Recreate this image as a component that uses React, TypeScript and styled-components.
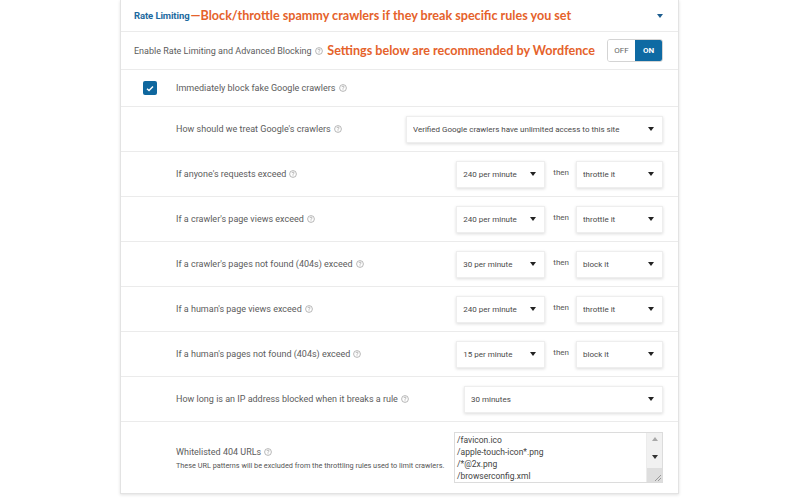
import React from "react";
import styled, { createGlobalStyle } from "styled-components";

const Global = createGlobalStyle`
  html, body { margin: 0; padding: 0; background: #ffffff; }
  body { width: 800px; height: 500px; overflow: hidden; font-family: Roboto, "Liberation Sans", sans-serif; }
`;

const Page = styled.div`
  width: 800px;
  height: 500px;
  display: flex;
  justify-content: flex-start;
  padding-left: 120px;
  box-sizing: border-box;
`;

const Panel = styled.section`
  width: 559px;
  height: 494px;
  box-sizing: border-box;
  border: 1px solid #e3e3e3;
  border-top: none;
  background: #fff;
  box-shadow: 0 1px 3px rgba(0, 0, 0, 0.12);
  display: flex;
  flex-direction: column;
`;

const Row = styled.div<{ $h: number; $pl?: number; $last?: boolean }>`
  height: ${(p) => p.$h}px;
  flex: none;
  box-sizing: border-box;
  border-bottom: ${(p) => (p.$last ? "none" : "1px solid #ebebeb")};
  display: flex;
  align-items: center;
  padding-left: ${(p) => p.$pl ?? 55}px;
  padding-right: 15px;
`;

const HeaderTitle = styled.span`
  font-size: 9.5px;
  font-weight: 700;
  color: #1c6aa0;
  letter-spacing: -0.1px;
  margin-right: 1px;
`;

const Note = styled.span<{ $size?: number; $mr?: number }>`
  font-family: Lato, "Open Sans", sans-serif;
  font-weight: 700;
  color: #e5622b;
  font-size: ${(p) => p.$size ?? 13}px;
  white-space: nowrap;
  margin-right: ${(p) => p.$mr ?? 0}px;
`;

const Spacer = styled.div`
  flex: 1;
`;

const Label = styled.span`
  font-size: 9px;
  color: #5c5c5c;
  white-space: nowrap;
  display: inline-flex;
  align-items: center;
  gap: 3px;
`;

const LabelStack = styled.div`
  display: flex;
  flex-direction: column;
  gap: 4px;
  padding-top: 1px;
`;

const SubLabel = styled.span`
  font-size: 7.3px;
  color: #555;
  white-space: nowrap;
`;

const Toggle = styled.div`
  display: flex;
  height: 23px;
  width: 56px;
  border-radius: 3px;
  overflow: hidden;
  border: 1px solid #d4d4d4;
  box-sizing: border-box;
`;

const ToggleHalf = styled.div<{ $on?: boolean }>`
  flex: 1;
  display: flex;
  align-items: center;
  justify-content: center;
  font-size: 8px;
  font-weight: ${(p) => (p.$on ? 700 : 400)};
  color: ${(p) => (p.$on ? "#fff" : "#666")};
  background: ${(p) => (p.$on ? "#0e6aa3" : "#fff")};
`;

const Check = styled.div`
  width: 14px;
  height: 14px;
  border-radius: 2px;
  background: #0f679e;
  display: flex;
  align-items: center;
  justify-content: center;
  margin-right: 19px;
  flex: none;
`;

const SelectBox = styled.div<{ $w: number }>`
  width: ${(p) => p.$w}px;
  height: 27px;
  box-sizing: border-box;
  background: #fff;
  border: 1px solid #eeeeee;
  box-shadow: 0 1px 3px rgba(0, 0, 0, 0.14);
  display: flex;
  align-items: center;
  padding: 0 8px 0 6px;
  font-size: 8px;
  color: #4a4a4a;
  flex: none;
`;

const SelectText = styled.span`
  flex: 1;
  white-space: nowrap;
  overflow: hidden;
`;

const Caret = styled.span<{ $color?: string; $up?: boolean }>`
  width: 0;
  height: 0;
  border-left: 3px solid transparent;
  border-right: 3px solid transparent;
  border-top: 4px solid ${(p) => p.$color ?? "#222"};
  transform: ${(p) => (p.$up ? "rotate(180deg)" : "none")};
`;

const Then = styled.span`
  font-size: 8px;
  color: #555;
  margin: 0 7px 0 8px;
  align-self: center;
  transform: translateY(-2px);
`;

const Pair = styled.div`
  display: flex;
  align-items: center;
`;

const TextArea = styled.div`
  width: 209px;
  height: 51px;
  box-sizing: border-box;
  border: 1px solid #dcdcdc;
  display: flex;
  background: #fff;
`;

const TextLines = styled.div`
  flex: 1;
  padding: 1px 0 0 2px;
  font-size: 8.5px;
  line-height: 12px;
  color: #444;
  white-space: nowrap;
  overflow: hidden;
`;

const ScrollBar = styled.div`
  width: 15px;
  background: #f1f1f1;
  display: flex;
  flex-direction: column;
  align-items: center;
  justify-content: space-between;
  border-left: 1px solid #ececec;
`;

const ScrollBtn = styled.div`
  height: 12px;
  display: flex;
  align-items: center;
  justify-content: center;
`;

const Grip = styled.div`
  width: 15px;
  height: 14px;
  background: #dedede;
  display: flex;
  align-items: flex-end;
  justify-content: flex-end;
`;

const Help = () => (
  <svg width="8" height="8" viewBox="0 0 8 8" aria-hidden>
    <circle cx="4" cy="4" r="3.4" fill="none" stroke="#9a9a9a" strokeWidth="0.7" />
    <path d="M2.9 3.1 Q3 2.1 4 2.1 Q5.1 2.1 5.1 3 Q5.1 3.6 4.4 3.9 Q4 4.1 4 4.7" fill="none" stroke="#9a9a9a" strokeWidth="0.7" />
    <circle cx="4" cy="5.8" r="0.45" fill="#9a9a9a" />
  </svg>
);

const Select = ({ w, text }: { w: number; text: string }) => (
  <SelectBox $w={w}>
    <SelectText>{text}</SelectText>
    <Caret />
  </SelectBox>
);

type RuleRow = { label: string; rate: string; action: string };

const rules: RuleRow[] = [
  { label: "If anyone's requests exceed", rate: "240 per minute", action: "throttle it" },
  { label: "If a crawler's page views exceed", rate: "240 per minute", action: "throttle it" },
  { label: "If a crawler's pages not found (404s) exceed", rate: "30 per minute", action: "block it" },
  { label: "If a human's page views exceed", rate: "240 per minute", action: "throttle it" },
  { label: "If a human's pages not found (404s) exceed", rate: "15 per minute", action: "block it" },
];

export default function App() {
  return (
    <>
      <Global />
      <Page>
        <Panel>
          <Row $h={32} $pl={13}>
            <HeaderTitle>Rate Limiting</HeaderTitle>
            <Note $size={12.6}>—Block/throttle spammy crawlers if they break specific rules you set</Note>
            <Spacer />
            <Caret $color="#1d5d8f" />
          </Row>
          <Row $h={38} $pl={13}>
            <Label>
              Enable Rate Limiting and Advanced Blocking <Help />
            </Label>
            <Spacer />
            <Note $size={12.6} $mr={12}>
              Settings below are recommended by Wordfence
            </Note>
            <Toggle>
              <ToggleHalf>OFF</ToggleHalf>
              <ToggleHalf $on>ON</ToggleHalf>
            </Toggle>
          </Row>
          <Row $h={37} $pl={22}>
            <Check>
              <svg width="8" height="7" viewBox="0 0 8 7">
                <path d="M1 3.8 L3 5.6 L7 1.4" fill="none" stroke="#fff" strokeWidth="1.4" />
              </svg>
            </Check>
            <Label>
              Immediately block fake Google crawlers <Help />
            </Label>
          </Row>
          <Row $h={45}>
            <Label>
              How should we treat Google's crawlers <Help />
            </Label>
            <Spacer />
            <Select w={257} text="Verified Google crawlers have unlimited access to this site" />
          </Row>
          {rules.map((r) => (
            <Row $h={45} key={r.label}>
              <Label>
                {r.label} <Help />
              </Label>
              <Spacer />
              <Pair>
                <Select w={89} text={r.rate} />
                <Then>then</Then>
                <Select w={87} text={r.action} />
              </Pair>
            </Row>
          ))}
          <Row $h={45}>
            <Label>
              How long is an IP address blocked when it breaks a rule <Help />
            </Label>
            <Spacer />
            <Select w={199} text="30 minutes" />
          </Row>
          <Row $h={71} $last>
            <LabelStack>
              <Label>
                Whitelisted 404 URLs <Help />
              </Label>
              <SubLabel>These URL patterns will be excluded from the throttling rules used to limit crawlers.</SubLabel>
            </LabelStack>
            <Spacer />
            <TextArea>
              <TextLines>
                /favicon.ico
                <br />
                /apple-touch-icon*.png
                <br />
                /*@2x.png
                <br />
                /browserconfig.xml
              </TextLines>
              <ScrollBar>
                <ScrollBtn>
                  <Caret $color="#a8a8a8" $up />
                </ScrollBtn>
                <ScrollBtn>
                  <Caret $color="#333" />
                </ScrollBtn>
                <Grip>
                  <svg width="10" height="10" viewBox="0 0 10 10">
                    <path d="M9 3 L3 9 M9 6 L6 9" stroke="#888" strokeWidth="0.8" />
                  </svg>
                </Grip>
              </ScrollBar>
            </TextArea>
          </Row>
        </Panel>
      </Page>
    </>
  );
}
